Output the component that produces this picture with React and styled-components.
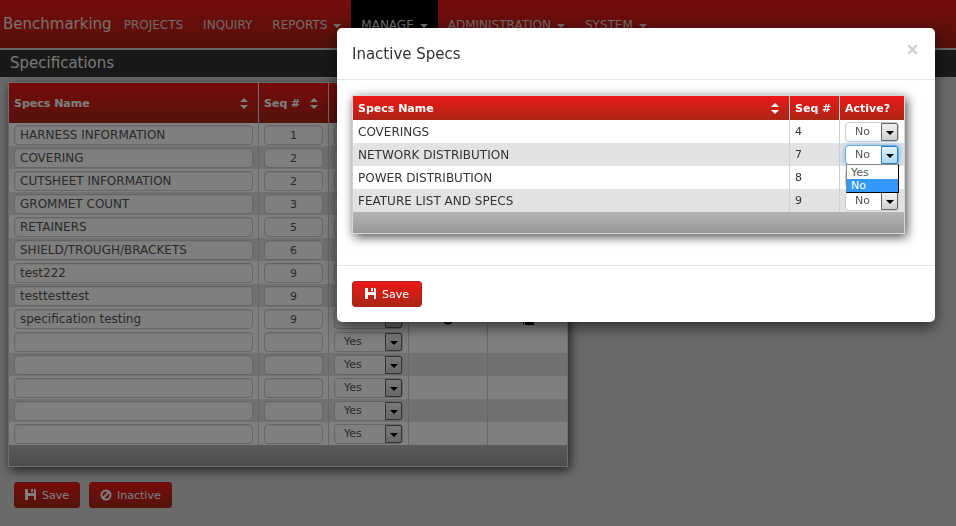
import React, { useId } from 'react';
import styled, { createGlobalStyle, css } from 'styled-components';

const Global = createGlobalStyle`
  *, *::before, *::after { box-sizing: border-box; }
  body {
    margin: 0;
    background: #d4d4d7;
    color: #333;
    font: 11px/16px Verdana, "DejaVu Sans", sans-serif;
  }
  button, input, select { font: inherit; }
`;

const redGradient = 'linear-gradient(#ee1818, #a92616)';
const silverGradient = 'linear-gradient(#b4b4b6, #98989a)';

const Page = styled.div`
  min-height: 100vh;
`;

const Navbar = styled.nav`
  display: flex;
  height: 50px;
  background: linear-gradient(#ea1818, #a82313);
  border-bottom: 2px solid #d0d0d0;
`;

const Brand = styled.a`
  padding: 16px 2px 16px 3px;
  font-size: 15px;
  color: #fff;
  opacity: 0.85;
  text-decoration: none;
`;

const NavLink = styled.a`
  display: flex;
  align-items: center;
  gap: 6px;
  padding: 1px 10px 0;
  font-size: 12px;
  color: ${(p) => (p.$active ? '#ddd' : '#e6d4d2')};
  background: ${(p) => (p.$active ? '#000' : 'transparent')};
  text-decoration: none;
`;

const Caret = styled.span`
  margin-top: 2px;
  border: 4px solid transparent;
  border-top-color: currentColor;
  border-bottom: 0;
`;

const TitleBar = styled.h1`
  margin: 0 0 5px;
  padding: 3px 10px 4px;
  font-size: 15px;
  line-height: 20px;
  font-weight: normal;
  color: #eee;
  background: #323232;
`;

const Table = styled.table`
  table-layout: fixed;
  width: ${(p) => (p.$wide ? '100%' : '560px')};
  margin: ${(p) => (p.$wide ? '0' : '0 8px')};
  border-collapse: collapse;
  background: #fff;
  border: 1px solid #d8d8da;
  box-shadow: 2px 3px 10px rgba(0, 0, 0, 0.7);
`;

const HeadRow = styled.tr`
  height: ${(p) => p.$height}px;
  background: ${redGradient};
`;

const Th = styled.th`
  padding: 2px 5px 0;
  text-align: left;
  color: #fff;
  border-left: 1px solid #e0d4d4;
`;

const HeadLabel = styled.span`
  display: flex;
  align-items: center;
  justify-content: space-between;
  white-space: nowrap;
  padding-right: 5px;
`;

const Tr = styled.tr`
  height: 23px;
  &:nth-child(even) { background: #e1e2e4; }
`;

const Td = styled.td`
  padding: 2px 5px 0;
  font-size: ${(p) => (p.$name ? 12 : 11)}px;
  border-left: 1px solid #cfcfd1;
  text-align: ${(p) => (p.$center ? 'center' : 'left')};
`;

const FootCell = styled.td`
  height: 22px;
  padding: 0;
  background: ${silverGradient};
`;

const Field = styled.input`
  display: block;
  width: 100%;
  height: 20px;
  padding: 0 5px;
  color: #555;
  background: #fff;
  border: 1px solid #ccc;
  border-radius: 4px;
  box-shadow: inset 0 1px 1px rgba(0, 0, 0, 0.075);
  text-align: ${(p) => (p.$center ? 'center' : 'left')};
`;

const focusRing = css`
  border-color: #66afe9;
  box-shadow: 0 0 6px rgba(102, 175, 233, 0.8);
`;

const SelectBox = styled.span`
  position: relative;
  display: flex;
  width: 100%;
  height: 20px;
  background: #fff;
  border: 1px solid #ccc;
  border-radius: 4px;
  ${(p) => p.$open && focusRing}
`;

const NativeSelect = styled.select`
  appearance: none;
  flex: 1;
  min-width: 0;
  padding: 0 9px;
  color: #555;
  background: transparent;
  border: 0;
  outline: 0;
`;

const SelectArrow = styled.span`
  display: flex;
  align-items: center;
  justify-content: center;
  width: 17px;
  border: 1px solid ${(p) => (p.$open ? '#2f7fbd' : '#666')};
  border-radius: 0 2px 2px 0;
  background: ${(p) => (p.$open ? 'linear-gradient(#e4f4fd, #a9d9f3)' : 'linear-gradient(#f2f2f2, #cfcfcf)')};
  pointer-events: none;

  &::after {
    content: '';
    margin-top: 2px;
    border: 4px solid transparent;
    border-top-color: #000;
    border-bottom: 0;
  }
`;

const OptionList = styled.ul`
  position: absolute;
  z-index: 1;
  top: 18px;
  left: 0;
  right: -1px;
  margin: 0;
  padding: 1px 0 0;
  list-style: none;
  line-height: 13px;
  color: #555;
  background: #fff;
  border: 1px solid #000;
  border-top-color: #888;
  border-left-color: #888;
`;

const Option = styled.li`
  padding: 0 4px;
  color: ${(p) => (p.$selected ? '#fff' : 'inherit')};
  background: ${(p) => (p.$selected ? '#3399ff' : 'transparent')};
`;

const Button = styled.button`
  display: inline-flex;
  align-items: center;
  gap: 5px;
  height: 26px;
  padding: 2px ${(p) => (p.$roomy ? 12 : 10)}px 0;
  color: #fff;
  background: ${redGradient};
  border: 1px solid #b32217;
  border-radius: 3px;

  svg { margin-bottom: 3px; }
`;

const Actions = styled.div`
  display: flex;
  gap: 9px;
  padding: 15px 14px;
`;

const RowButton = styled.button`
  display: inline-flex;
  padding: 0;
  color: #000;
  background: none;
  border: 0;
  vertical-align: middle;
`;

const Backdrop = styled.div`
  position: fixed;
  inset: 0;
  display: flex;
  align-items: flex-start;
  justify-content: flex-end;
  padding: 28px 21px;
  background: rgba(0, 0, 0, 0.5);
`;

const Dialog = styled.section`
  width: 100%;
  max-width: 598px;
  background: #fff;
  border-radius: 5px;
  box-shadow: 0 5px 15px rgba(0, 0, 0, 0.6);
`;

const DialogHeader = styled.header`
  display: flex;
  justify-content: space-between;
  padding: 16px 17px 15px 15px;
  border-bottom: 1px solid #e5e5e5;
`;

const DialogTitle = styled.h2`
  margin: 0;
  font-size: 15px;
  line-height: 20px;
  font-weight: normal;
`;

const Close = styled.button`
  padding: 0;
  height: 16px;
  background: none;
  border: 0;
  color: #ccc;
`;

const DialogBody = styled.div`
  padding: 15px 30px 31px 15px;
`;

const DialogFooter = styled.footer`
  padding: 15px;
  border-top: 1px solid #e5e5e5;
  line-height: 0;
`;

const SortIcon = () => (
  <svg width="8" height="11" viewBox="0 0 8 11" fill="currentColor" aria-hidden="true">
    <path d="M4 0 8 4H0zM4 11 0 7h8z" />
  </svg>
);

const SaveIcon = () => (
  <svg width="12" height="11" viewBox="0 0 12 11" fill="currentColor" aria-hidden="true">
    <path d="M0 0h3v4h6V0h1l1 1v10H9V7H3v4H0zM6 0h2v3H6z" />
  </svg>
);

const BanIcon = () => (
  <svg width="12" height="12" viewBox="0 0 12 12" fill="none" stroke="currentColor" strokeWidth="2" aria-hidden="true">
    <circle cx="6" cy="6" r="4.500" />
    <path d="M3 9l6-6" />
  </svg>
);

const CloseIcon = () => (
  <svg width="11" height="11" viewBox="0 0 11 11" stroke="currentColor" strokeWidth="2.200" aria-hidden="true">
    <path d="M1.300 1.300l8.400 8.400M9.700 1.300l-8.400 8.400" />
  </svg>
);

const GearIcon = () => (
  <svg width="12" height="12" viewBox="0 0 12 12" fill="none" stroke="currentColor" aria-hidden="true">
    <circle cx="6" cy="6" r="4.500" strokeWidth="2" />
  </svg>
);

const ListIcon = () => (
  <svg width="12" height="12" viewBox="0 0 12 12" fill="currentColor" aria-hidden="true">
    <path d="M0 1h2v2H0zM3 1h9v2H3zM0 5h2v2H0zM3 5h9v2H3zM1 9h1v2H1zM3 9h9v3H3z" />
  </svg>
);

const navItems = [
  { label: 'PROJECTS' },
  { label: 'INQUIRY' },
  { label: 'REPORTS', menu: true },
  { label: 'MANAGE', menu: true, active: true },
  { label: 'ADMINISTRATION', menu: true },
  { label: 'SYSTEM', menu: true },
];

const specs = [
  ['HARNESS INFORMATION', 1],
  ['COVERING', 2],
  ['CUTSHEET INFORMATION', 2],
  ['GROMMET COUNT', 3],
  ['RETAINERS', 5],
  ['SHIELD/TROUGH/BRACKETS', 6],
  ['test222', 9],
  ['testtesttest', 9],
  ['specification testing', 9],
];

const blankSpecs = Array.from({ length: 5 }, () => ['', '']);

const inactiveSpecs = [
  ['COVERINGS', 4],
  ['NETWORK DISTRIBUTION', 7],
  ['POWER DISTRIBUTION', 8],
  ['FEATURE LIST AND SPECS', 9],
];

function ActiveSelect({ value, label, open }) {
  const listId = useId();
  return (
    <SelectBox $open={open}>
      <NativeSelect defaultValue={value} aria-label={label} aria-controls={open ? listId : undefined}>
        <option>Yes</option>
        <option>No</option>
      </NativeSelect>
      <SelectArrow $open={open} />
      {open && (
        <OptionList id={listId} role="listbox" aria-label={label}>
          {['Yes', 'No'].map((o) => (
            <Option key={o} role="option" aria-selected={o === value} $selected={o === value}>{o}</Option>
          ))}
        </OptionList>
      )}
    </SelectBox>
  );
}

function SpecRows({ rows, start }) {
  return (
    <tbody>
      {rows.map(([name, seq], i) => {
        const row = start + i;
        return (
          <Tr key={row}>
            <Td $name><Field defaultValue={name} aria-label={`Specs name, row ${row}`} /></Td>
            <Td><Field $center defaultValue={seq} aria-label={`Sequence, row ${row}`} /></Td>
            <Td><ActiveSelect value="Yes" label={`Active, row ${row}`} /></Td>
            <Td $center>{name && <RowButton aria-label="Settings"><GearIcon /></RowButton>}</Td>
            <Td $center>{name && <RowButton aria-label="Details"><ListIcon /></RowButton>}</Td>
          </Tr>
        );
      })}
    </tbody>
  );
}

function SpecsTable() {
  return (
    <Table>
      <colgroup>
        <col width="250" /><col width="70" /><col width="80" /><col width="79" /><col />
      </colgroup>
      <thead>
        <HeadRow $height={40}>
          <Th><HeadLabel>Specs Name <SortIcon /></HeadLabel></Th>
          <Th><HeadLabel>Seq # <SortIcon /></HeadLabel></Th>
          <Th aria-label="Active" /><Th aria-label="Settings" /><Th aria-label="Details" />
        </HeadRow>
      </thead>
      <SpecRows rows={specs} start={1} />
      <SpecRows rows={blankSpecs} start={specs.length + 1} />
      <tfoot><tr><FootCell colSpan={5} /></tr></tfoot>
    </Table>
  );
}

function InactiveTable() {
  return (
    <Table $wide>
      <colgroup>
        <col /><col width="50" /><col width="65" />
      </colgroup>
      <thead>
        <HeadRow $height={24}>
          <Th><HeadLabel>Specs Name <SortIcon /></HeadLabel></Th>
          <Th>Seq #</Th>
          <Th>Active?</Th>
        </HeadRow>
      </thead>
      <tbody>
        {inactiveSpecs.map(([name, seq]) => (
          <Tr key={name}>
            <Td $name>{name}</Td>
            <Td>{seq}</Td>
            <Td><ActiveSelect value="No" label={`${name} active`} open={seq === 7} /></Td>
          </Tr>
        ))}
      </tbody>
      <tfoot><tr><FootCell colSpan={3} /></tr></tfoot>
    </Table>
  );
}

export default function App() {
  return (
    <Page>
      <Global />
      <Navbar>
        <Brand href="#">Benchmarking</Brand>
        {navItems.map((item) => (
          <NavLink key={item.label} href="#" $active={item.active}>
            {item.label}
            {item.menu && <Caret />}
          </NavLink>
        ))}
      </Navbar>
      <TitleBar>Specifications</TitleBar>
      <main>
        <SpecsTable />
        <Actions>
          <Button><SaveIcon />Save</Button>
          <Button><BanIcon />Inactive</Button>
        </Actions>
      </main>
      <Backdrop>
        <Dialog role="dialog" aria-modal="true" aria-labelledby="inactive-title">
          <DialogHeader>
            <DialogTitle id="inactive-title">Inactive Specs</DialogTitle>
            <Close aria-label="Close"><CloseIcon /></Close>
          </DialogHeader>
          <DialogBody><InactiveTable /></DialogBody>
          <DialogFooter><Button $roomy><SaveIcon />Save</Button></DialogFooter>
        </Dialog>
      </Backdrop>
    </Page>
  );
}
